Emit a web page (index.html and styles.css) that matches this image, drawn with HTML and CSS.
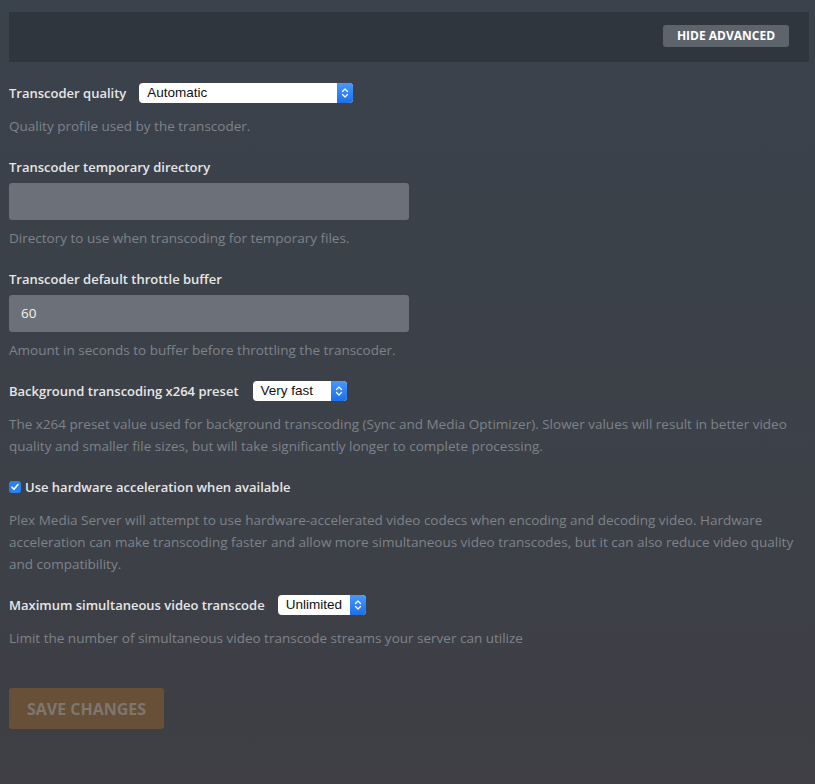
FILE: index.html
```
<!DOCTYPE html>
<html>
<head>
<meta charset="utf-8">
<link rel="stylesheet" href="styles.css">
</head>
<body>
<div class="page">
  <div class="toolbar">
    <button class="btn-hide">HIDE ADVANCED</button>
  </div>

  <div class="group">
    <div class="row">
      <span class="label">Transcoder quality</span>
      <div class="select w-quality"><span class="select-text">Automatic</span><span class="select-arrow"><svg width="8" height="12" viewBox="0 0 8 12"><path d="M1.5 4.5 L4 2 L6.5 4.5 M1.5 7.5 L4 10 L6.5 7.5" fill="none" stroke="#fff" stroke-width="1.3" stroke-linecap="round" stroke-linejoin="round"/></svg></span></div>
    </div>
    <p class="desc">Quality profile used by the transcoder.</p>
  </div>

  <div class="group">
    <div class="label-line">Transcoder temporary directory</div>
    <div class="input"></div>
    <p class="desc desc-input">Directory to use when transcoding for temporary files.</p>
  </div>

  <div class="group">
    <div class="label-line">Transcoder default throttle buffer</div>
    <div class="input">60</div>
    <p class="desc desc-input">Amount in seconds to buffer before throttling the transcoder.</p>
  </div>

  <div class="group">
    <div class="row">
      <span class="label">Background transcoding x264 preset</span>
      <div class="select w-preset"><span class="select-text">Very fast</span><span class="select-arrow"><svg width="8" height="12" viewBox="0 0 8 12"><path d="M1.5 4.5 L4 2 L6.5 4.5 M1.5 7.5 L4 10 L6.5 7.5" fill="none" stroke="#fff" stroke-width="1.3" stroke-linecap="round" stroke-linejoin="round"/></svg></span></div>
    </div>
    <p class="desc">The x264 preset value used for background transcoding (Sync and Media Optimizer). Slower values will result in better video quality and smaller file sizes, but will take significantly longer to complete processing.</p>
  </div>

  <div class="group">
    <div class="row">
      <span class="checkbox"><svg width="12" height="12" viewBox="0 0 12 12"><path d="M3 6.2 L5 8.3 L9 3.6" fill="none" stroke="#fff" stroke-width="1.6" stroke-linecap="round" stroke-linejoin="round"/></svg></span>
      <span class="label check-label">Use hardware acceleration when available</span>
    </div>
    <p class="desc">Plex Media Server will attempt to use hardware-accelerated video codecs when encoding and decoding video. Hardware acceleration can make transcoding faster and allow more simultaneous video transcodes, but it can also reduce video quality and compatibility.</p>
  </div>

  <div class="group">
    <div class="row">
      <span class="label">Maximum simultaneous video transcode</span>
      <div class="select w-max"><span class="select-text">Unlimited</span><span class="select-arrow"><svg width="8" height="12" viewBox="0 0 8 12"><path d="M1.5 4.5 L4 2 L6.5 4.5 M1.5 7.5 L4 10 L6.5 7.5" fill="none" stroke="#fff" stroke-width="1.3" stroke-linecap="round" stroke-linejoin="round"/></svg></span></div>
    </div>
    <p class="desc">Limit the number of simultaneous video transcode streams your server can utilize</p>
  </div>

  <button class="btn-save">SAVE CHANGES</button>
</div>
</body>
</html>
```

FILE: styles.css
```
html, body {
  margin: 0;
  padding: 0;
}
body {
  width: 815px;
  height: 784px;
  overflow: hidden;
  background: linear-gradient(180deg, #3a424b 0%, #3c4149 45%, #3f3f45 100%);
  font-family: "Open Sans", "Noto Sans", sans-serif;
  font-size: 13px;
  color: #e8e8e8;
}
.page {
  padding: 12px 6px 0 9px;
}
.toolbar {
  width: 800px;
  height: 50px;
  background: #2f363e;
  display: flex;
  justify-content: flex-end;
  align-items: flex-start;
  padding: 13px 20px 0 0;
  box-sizing: border-box;
  margin-bottom: 21px;
}
.btn-hide {
  width: 126px;
  height: 22px;
  border: 0;
  border-radius: 3px;
  background: #5e646c;
  color: #fff;
  font-family: "Open Sans", sans-serif;
  font-weight: 700;
  font-size: 12px;
  padding: 0;
  line-height: 22px;
}
.group {
  margin-bottom: 20px;
}
.row {
  display: flex;
  align-items: center;
  height: 20px;
}
.label, .label-line {
  font-weight: 600;
  color: #e6e6e6;
  line-height: 20px;
  white-space: nowrap;
}
.row .label {
  margin-right: 13px;
}
.select {
  display: flex;
  height: 20px;
  background: #fff;
  border-radius: 4px;
  overflow: hidden;
  box-sizing: border-box;
}
.select-text {
  flex: 1;
  font-family: "Liberation Sans", Arial, sans-serif;
  font-size: 13.5px;
  color: #111;
  line-height: 20px;
  padding-left: 8px;
}
.select-arrow {
  width: 16px;
  background: linear-gradient(180deg, #4a98fb, #1b70ea);
  display: flex;
  align-items: center;
  justify-content: center;
}
.w-quality { width: 214px; }
.w-preset { width: 94px; margin-left: 1px; }
.w-max { width: 88px; }
.desc {
  margin: 12px 0 0;
  line-height: 22px;
  color: #7e838a;
  font-size: 13.5px;
  width: 800px;
}
.desc-input {
  margin-top: 7px;
}
.input {
  margin-top: 6px;
  width: 400px;
  height: 37px;
  box-sizing: border-box;
  background: #6c7078;
  border-radius: 3px;
  color: #f2f2f2;
  font-size: 13.5px;
  line-height: 37px;
  padding-left: 12px;
}
.checkbox {
  width: 12px;
  height: 12px;
  border-radius: 3px;
  background: #2a82f0;
  display: inline-flex;
  margin-right: 4px;
}
.check-label {
  margin-right: 0;
}
.btn-save {
  margin-top: 19px;
  width: 155px;
  height: 41px;
  border: 0;
  border-radius: 3px;
  background: #684f37;
  color: #7d7770;
  font-family: "Open Sans", sans-serif;
  font-weight: 700;
  font-size: 16px;
  padding: 0;
}
```
